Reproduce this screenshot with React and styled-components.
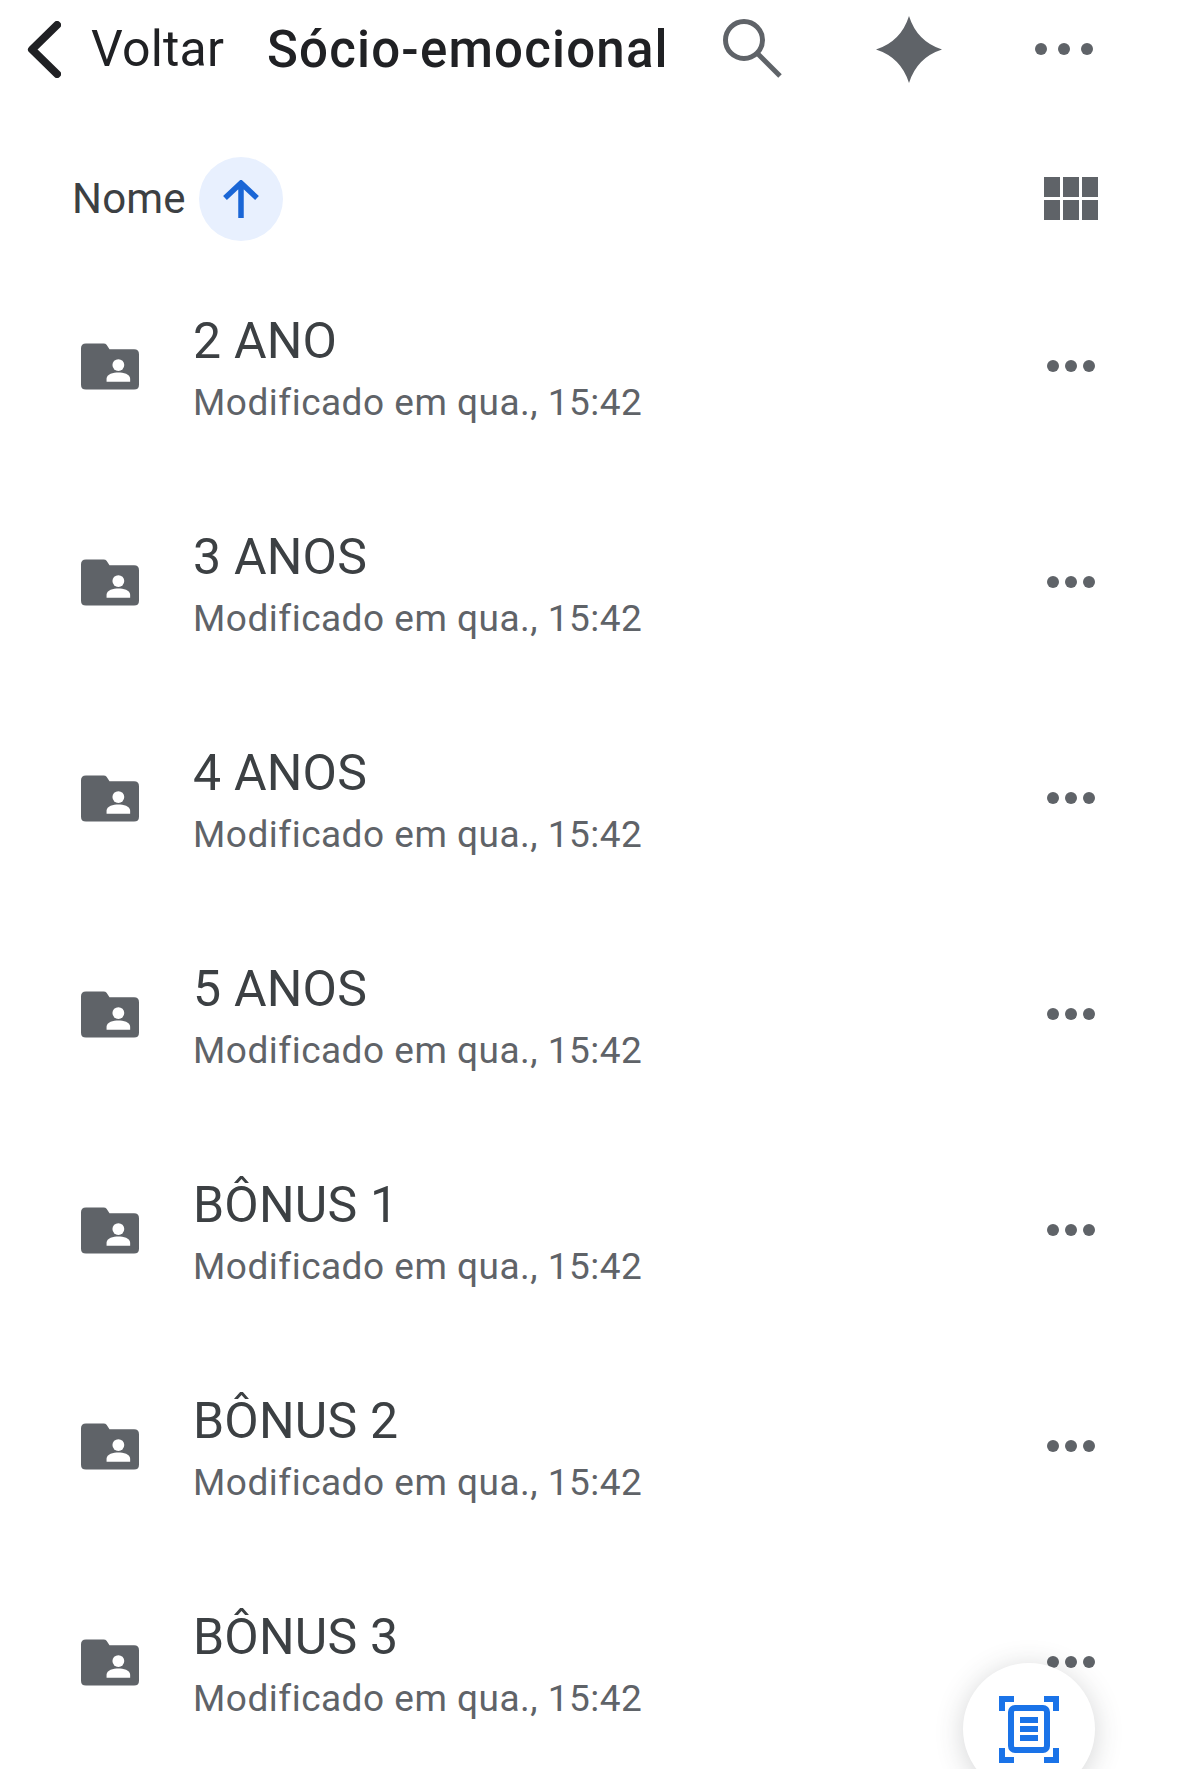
import React from 'react';
import styled, { createGlobalStyle } from 'styled-components';

const folders = ['2 ANO', '3 ANOS', '4 ANOS', '5 ANOS', 'BÔNUS 1', 'BÔNUS 2', 'BÔNUS 3'];

const App = () => {
  return (
    <Page>
      <GlobalStyle />
      <Header>
        <BackIcon viewBox="0 0 34 57" aria-hidden="true">
          <path d="M30 4 L5 28.5 L30 53" />
        </BackIcon>
        <BackLabel>Voltar</BackLabel>
        <Title>Sócio-emocional</Title>
        <SearchIcon viewBox="0 0 60 60" aria-hidden="true">
          <circle cx="21" cy="21" r="18.5" />
          <path d="M34.5 34.5 L57 57" />
        </SearchIcon>
        <SparkIcon viewBox="0 0 66 67" aria-hidden="true">
          <path d="M33 0 Q41 25.5 66 33.5 Q41 41.5 33 67 Q25 41.5 0 33.5 Q25 25.5 33 0 Z" />
        </SparkIcon>
        <MoreIcon viewBox="0 0 58 12" aria-hidden="true">
          <circle cx="6" cy="6" r="6" />
          <circle cx="29" cy="6" r="6" />
          <circle cx="52" cy="6" r="6" />
        </MoreIcon>
      </Header>

      <SortBar>
        <SortLabel>Nome</SortLabel>
        <SortButton>
          <svg width="36" height="38" viewBox="0 0 36 38" aria-hidden="true">
            <path d="M18 38 V4 M2 18 L18 3 L34 18" fill="none" stroke="#1a66d6" strokeWidth="5.5" />
          </svg>
        </SortButton>
        <GridIcon>
          {[0, 1, 2, 3, 4, 5].map((n) => (
            <GridCell key={n} />
          ))}
        </GridIcon>
      </SortBar>

      <List>
        {folders.map((name) => (
          <Row key={name}>
            <FolderIcon viewBox="0 0 59 47" aria-hidden="true">
              <path
                fill="#5f6368"
                d="M5 0 H23 Q25 0 26 1.5 L29 6 H54 Q59 6 59 11 V42 Q59 47 54 47 H5 Q0 47 0 42 V5 Q0 0 5 0 Z"
              />
              <circle cx="38" cy="22" r="6" fill="#fff" />
              <path fill="#fff" d="M26 39 V36 C26 31 33 29.5 38 29.5 C43 29.5 50 31 50 36 V39 Z" />
            </FolderIcon>
            <RowText>
              <RowName>{name}</RowName>
              <RowMeta>Modificado em qua., 15:42</RowMeta>
            </RowText>
            <RowMore viewBox="0 0 48 12" aria-hidden="true">
              <circle cx="6" cy="6" r="6" />
              <circle cx="24" cy="6" r="6" />
              <circle cx="42" cy="6" r="6" />
            </RowMore>
          </Row>
        ))}
      </List>

      <ScanButton>
        <svg width="60" height="67" viewBox="0 0 60 67" aria-hidden="true">
          <g fill="none" stroke="#1a73e8" strokeWidth="6">
            <path d="M3 15 V3 H15 M45 3 H57 V15 M3 52 V64 H15 M45 64 H57 V52" />
            <rect x="12" y="12" width="36" height="42" rx="4" />
            <path d="M21 24 H39 M21 33 H39 M21 42 H39" />
          </g>
        </svg>
      </ScanButton>
    </Page>
  );
};

export default App;

const GlobalStyle = createGlobalStyle`
  html, body {
    margin: 0;
    padding: 0;
    background: #fff;
  }
`;

const Page = styled.div`
  position: relative;
  width: 1179px;
  height: 1769px;
  overflow: hidden;
  background: #fff;
  font-family: Roboto, "Liberation Sans", sans-serif;
`;

const Header = styled.header`
  display: flex;
  align-items: center;
  height: 98px;
  padding-left: 27px;
  box-sizing: border-box;
`;

const BackIcon = styled.svg`
  width: 34px;
  height: 57px;
  fill: none;
  stroke: #202124;
  stroke-width: 8;
  stroke-linecap: round;
  stroke-linejoin: round;
`;

const BackLabel = styled.span`
  margin-left: 30px;
  width: 176px;
  font-size: 50px;
  letter-spacing: 0.2px;
  color: #202124;
`;

const Title = styled.h1`
  margin: 0;
  width: 456px;
  font-size: 51px;
  font-weight: 500;
  letter-spacing: 1.2px;
  color: #202124;
  white-space: nowrap;
`;

const SearchIcon = styled.svg`
  width: 60px;
  height: 60px;
  fill: none;
  stroke: #5f6368;
  stroke-width: 5;
`;

const SparkIcon = styled.svg`
  margin-left: 93px;
  width: 66px;
  height: 67px;
  fill: #5f6368;
`;

const MoreIcon = styled.svg`
  margin-left: 93px;
  width: 58px;
  height: 12px;
  fill: #5f6368;
`;

const SortBar = styled.div`
  display: flex;
  align-items: center;
  height: 83px;
  margin-top: 59px;
  padding-left: 72px;
  padding-right: 81px;
`;

const SortLabel = styled.span`
  width: 127px;
  font-size: 42px;
  letter-spacing: 0.2px;
  color: #3c4043;
`;

const SortButton = styled.div`
  display: flex;
  align-items: center;
  justify-content: center;
  width: 84px;
  height: 84px;
  border-radius: 50%;
  background: #e8f0fe;
`;

const GridIcon = styled.div`
  display: grid;
  grid-template-columns: repeat(3, 16px);
  grid-template-rows: repeat(2, 20px);
  gap: 3px 3px;
  margin-left: auto;
`;

const GridCell = styled.span`
  background: #5f6368;
`;

const List = styled.div`
  display: flex;
  flex-direction: column;
  padding-top: 18px;
`;

const Row = styled.div`
  display: flex;
  align-items: center;
  height: 216px;
  padding-left: 81px;
  padding-right: 84px;
  flex-shrink: 0;
`;

const FolderIcon = styled.svg`
  width: 58px;
  height: 47px;
  flex-shrink: 0;
`;

const RowText = styled.div`
  display: flex;
  flex-direction: column;
  gap: 14px;
  margin-left: 54px;
  margin-top: 8px;
`;

const RowName = styled.span`
  font-size: 50px;
  line-height: 52px;
  letter-spacing: 0.2px;
  color: #3c4043;
`;

const RowMeta = styled.span`
  font-size: 37px;
  line-height: 44px;
  letter-spacing: 0.5px;
  color: #5f6368;
`;

const RowMore = styled.svg`
  margin-left: auto;
  width: 48px;
  height: 12px;
  fill: #5f6368;
`;

const ScanButton = styled.div`
  position: absolute;
  left: 963px;
  top: 1663px;
  display: flex;
  justify-content: center;
  padding-top: 33px;
  box-sizing: border-box;
  width: 132px;
  height: 132px;
  border-radius: 50%;
  background: #fff;
  box-shadow: 0 4px 28px rgba(60, 64, 67, 0.22);
`;
